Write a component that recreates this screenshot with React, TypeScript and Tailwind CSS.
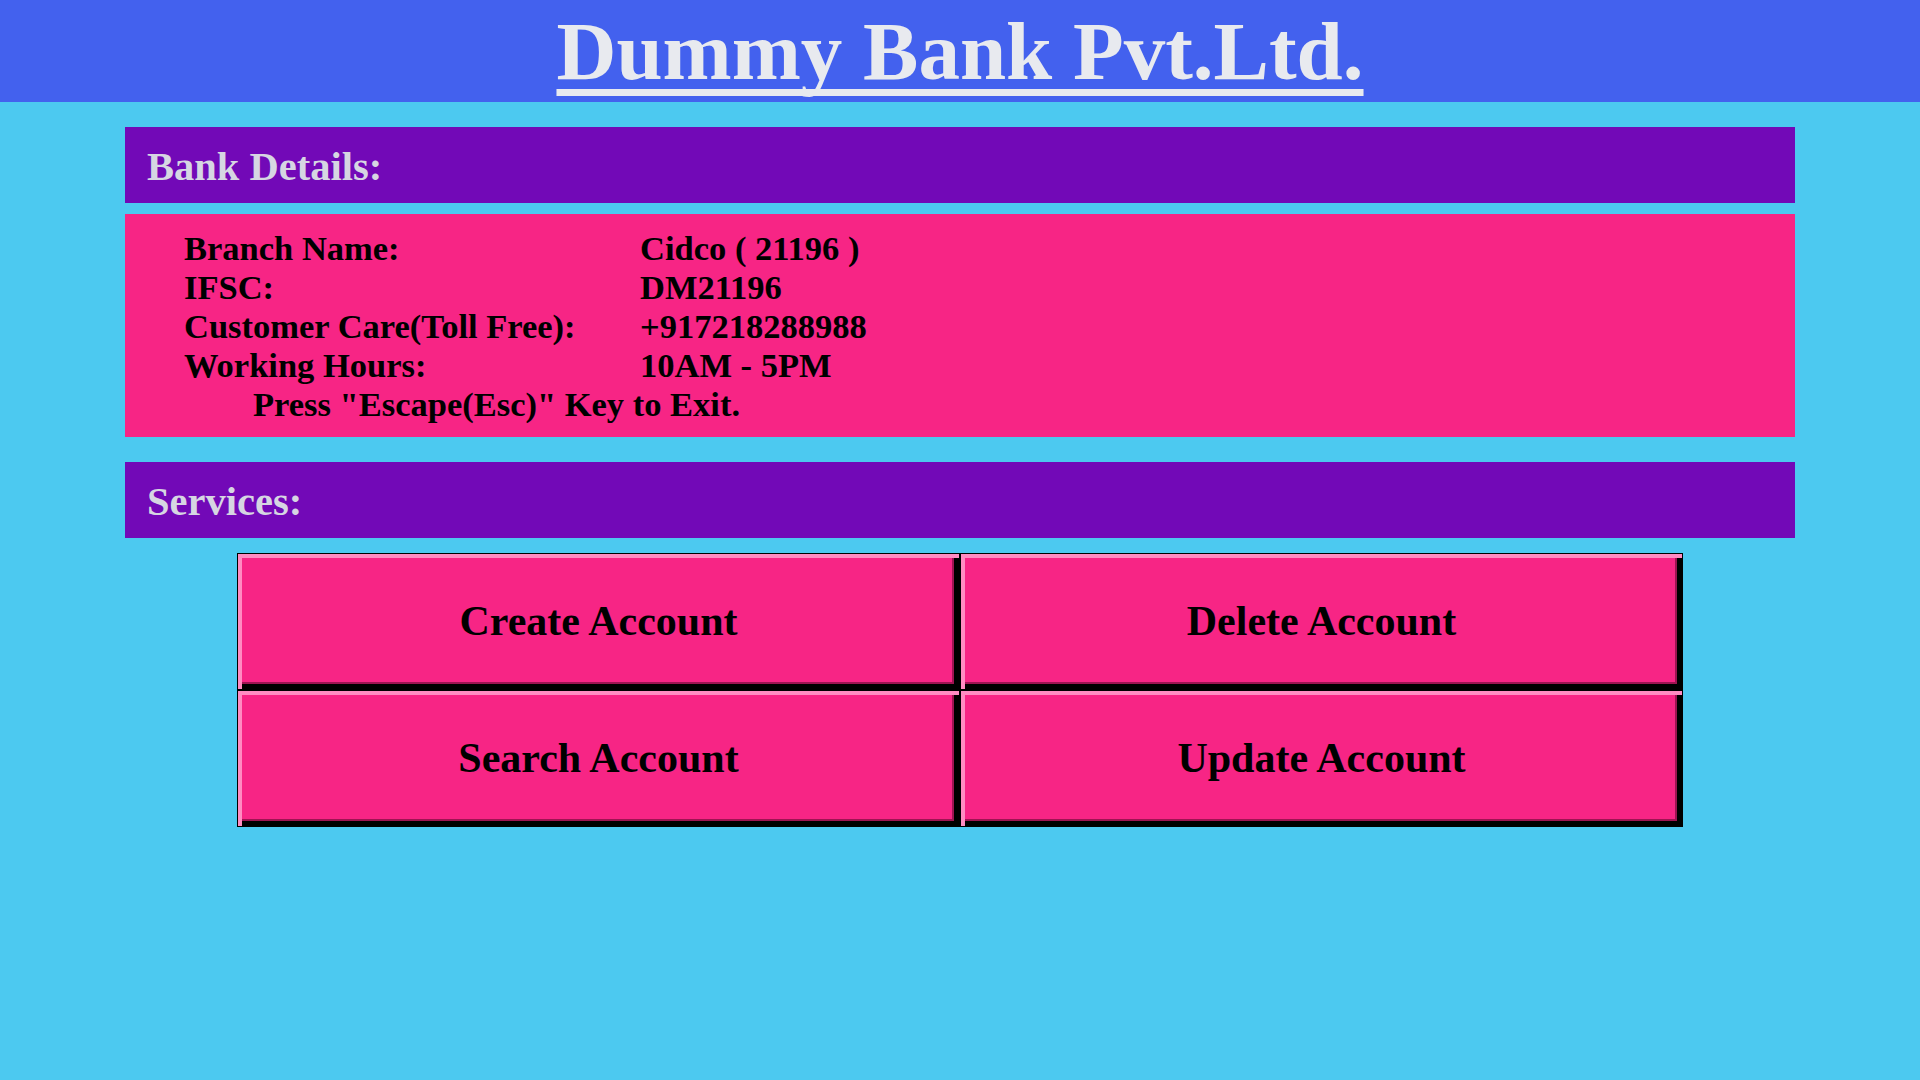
import React from "react";

const details = [
  { label: "Branch Name:", value: "Cidco ( 21196 )" },
  { label: "IFSC:", value: "DM21196" },
  { label: "Customer Care(Toll Free):", value: "+917218288988" },
  { label: "Working Hours:", value: "10AM - 5PM" },
];

const services = ["Create Account", "Delete Account", "Search Account", "Update Account"];

const SectionBar = ({ title }: { title: string }) => (
  <div className="h-[76px] bg-[#7209B7] px-[22px] pt-[20px]">
    <h2 className="text-[40.5px] leading-[40px] font-bold text-[#d6d6e2]">{title}</h2>
  </div>
);

const App = () => {
  return (
    <div className="min-h-screen w-full bg-[#4CC9F0] font-['Liberation_Serif',serif] pb-10">
      <header className="h-[102px] bg-[#4361EE] flex justify-center pt-[10px]">
        <h1 className="text-[83px] leading-[83px] font-bold text-[#e8eaef] underline decoration-[7px] underline-offset-[10px] [text-decoration-skip-ink:none]">
          Dummy Bank Pvt.Ltd.
        </h1>
      </header>

      <main className="mx-[125px] mt-[25px]">
        <SectionBar title="Bank Details:" />

        <div className="mt-[11px] h-[223px] bg-[#F72585] pl-[59px] pt-[15px] text-[34.5px] leading-[39px] font-bold text-black">
          {details.map((d) => (
            <div key={d.label} className="grid grid-cols-[456px_1fr]">
              <span>{d.label}</span>
              <span>{d.value}</span>
            </div>
          ))}
          <div className="ml-[69px]">Press "Escape(Esc)" Key to Exit.</div>
        </div>

        <div className="mt-[25px]">
          <SectionBar title="Services:" />
        </div>

        <div className="mx-[112px] mt-[15px] grid grid-cols-2">
          {services.map((s) => (
            <button
              key={s}
              className="h-[137px] border border-black bg-[#F72585] font-['Liberation_Serif',serif] text-[42px] font-bold text-black shadow-[inset_4px_4px_0_#ff8cc2,inset_-5px_-5px_0_#000,inset_-7px_-7px_0_#9e1452]"
            >
              {s}
            </button>
          ))}
        </div>
      </main>
    </div>
  );
};

export default App;
